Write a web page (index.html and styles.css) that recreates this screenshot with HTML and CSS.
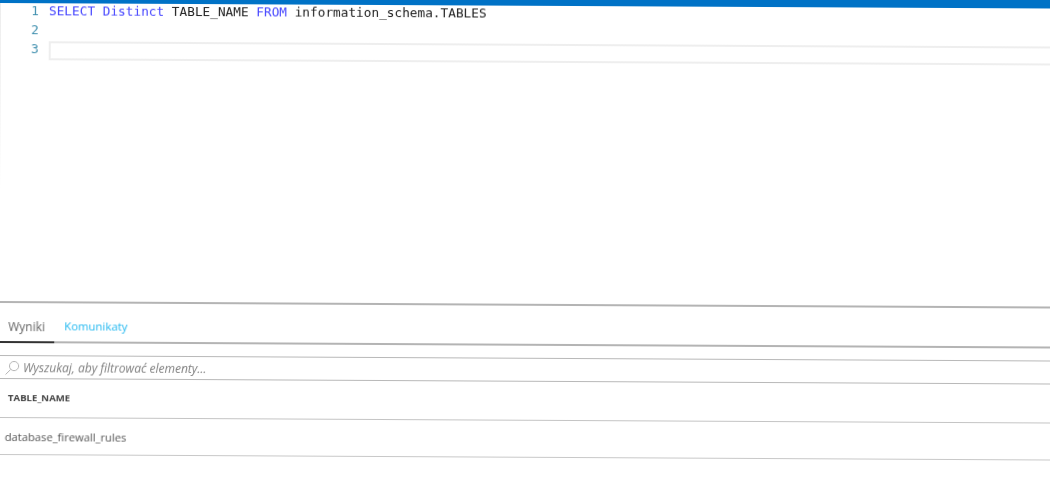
FILE: index.html
```html
<!DOCTYPE html>
<html lang="pl">
<head>
<meta charset="utf-8">
<title>Zapytanie</title>
<link rel="stylesheet" href="styles.css">
</head>
<body>
<div class="page">
  <div class="topbar"></div>
  <div class="editor">
    <div class="line"><span class="num">1</span><span class="code"><span class="kw">SELECT</span> <span class="kw">Distinct</span> TABLE_NAME <span class="kw">FROM</span> information_schema.TABLES</span></div>
    <div class="line"><span class="num">2</span><span class="code"></span></div>
    <div class="line current"><span class="num">3</span><span class="code"></span></div>
  </div>
  <div class="results">
    <div class="tabs">
      <div class="tab active">Wyniki</div>
      <div class="tab link">Komunikaty</div>
    </div>
    <div class="search">
      <svg class="search-icon" width="16" height="16" viewBox="0 0 16 16" aria-hidden="true"><circle cx="10" cy="6" r="4.6"/><path d="M6.6 9.4 1.5 14.5"/></svg>
      <span class="placeholder">Wyszukaj, aby filtrować elementy...</span>
    </div>
    <div class="thead">TABLE_NAME</div>
    <div class="trow">database_firewall_rules</div>
  </div>
</div>
</body>
</html>
```
FILE: styles.css
```css
html, body {
  margin: 0;
  height: 100%;
  background: #fff;
  overflow: hidden;
}
.page {
  width: 1070px;
  margin-top: -10px;
  transform: rotate(0.3deg);
  transform-origin: 0 10px;
  filter: blur(0.4px);
  font-family: "Open Sans", "Noto Sans", sans-serif;
}
.topbar {
  height: 13px;
  background: #0072c6;
}
.editor {
  height: 298px;
  box-sizing: border-box;
  border-left: 1px solid #ececec;
}
.line {
  display: flex;
  height: 19px;
  line-height: 15px;
  font-family: "DejaVu Sans Mono", monospace;
  font-size: 12.75px;
  color: #222;
}
.num {
  width: 38px;
  flex: none;
  text-align: right;
  color: #3f8fae;
}
.code {
  flex: 1;
  margin-left: 10px;
  white-space: pre;
}
.kw {
  color: #4646ff;
}
.current .code {
  box-sizing: border-box;
  border: 2px solid #eeeeee;
}
.results {
  border-top: 2px solid #b4b4b4;
}
.tabs {
  display: flex;
  height: 40px;
  box-sizing: border-box;
  border-bottom: 2px solid #b4b4b4;
}
.tab {
  height: 40px;
  box-sizing: border-box;
  padding-top: 15px;
  white-space: nowrap;
}
.tab.active {
  width: 56px;
  padding-left: 10px;
  font-size: 12px;
  color: #666;
  border-bottom: 2px solid #333;
}
.tab.link {
  padding-left: 10px;
  font-size: 11.4px;
  color: #22b8f0;
}
.search {
  display: flex;
  align-items: center;
  gap: 3px;
  height: 24px;
  box-sizing: border-box;
  margin-top: 12px;
  padding: 1px 0 0 6px;
  border-top: 1px solid #b8b8b8;
  border-bottom: 1px solid #b8b8b8;
}
.search-icon {
  flex: none;
  fill: none;
  stroke: #b4b4b4;
  stroke-width: 1;
}
.placeholder {
  font-size: 12px;
  font-style: italic;
  color: #808080;
}
.thead {
  height: 39px;
  box-sizing: border-box;
  padding: 12px 0 0 10px;
  font-size: 9.6px;
  font-weight: 700;
  color: #444;
  border-bottom: 1px solid #c4c4c4;
}
.trow {
  height: 37px;
  box-sizing: border-box;
  padding: 11px 0 0 7px;
  font-size: 11.2px;
  color: #555;
  border-bottom: 1px solid #c8c8c8;
}
```
